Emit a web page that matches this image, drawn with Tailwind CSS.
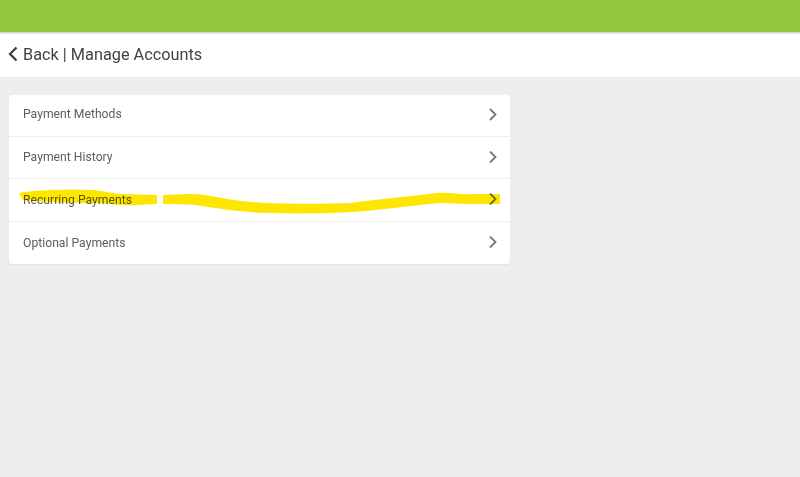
<!DOCTYPE html>
<html lang="en">
<head>
    <meta charset="UTF-8">
    <meta name="viewport" content="width=device-width, initial-scale=1.0">
    <title>Manage Accounts</title>
    <script src="https://cdn.jsdelivr.net/npm/@tailwindcss/browser@4"></script>
</head>
<body class="h-[477px] bg-[#eeeeee] font-['Roboto',sans-serif] overflow-hidden">
    <div class="relative h-[490px] w-[810px] bg-[#eeeeee] flex flex-col blur-[0.7px]">
        <div class="h-[32px] bg-[#92c83e] shadow-[0_1px_2px_rgba(0,0,0,0.25)] z-10"></div>
        <div class="h-[46px] bg-white flex items-center pl-[7px] pt-[2px] text-[16.3px] text-[#3f4346] border-b border-[#e8e8e8]">
            <svg class="w-[12px] h-[18px] mr-[4px] -mt-[3px]" viewBox="0 0 12 18" fill="none" stroke="#3a3f44" stroke-width="2.2">
                <path d="M9.5 2.5 L3 9 L9.5 15.5"/>
            </svg>
            <span>Back | Manage Accounts</span>
        </div>

        <div class="pt-[17px] pl-[9px]">
            <div class="w-[501px] bg-white rounded-[3px] shadow-[0_1px_2px_rgba(0,0,0,0.06)] text-[12.2px] text-[#5a5e62]">
                <div class="h-[42px] flex items-center justify-between pl-[14px] pr-[12px] pb-[2px] border-b border-[#ededed]">
                    <span>Payment Methods</span>
                    <svg class="w-[10px] h-[14px]" viewBox="0 0 10 14" fill="none" stroke="#74787c" stroke-width="1.8"><path d="M2 1 L7.5 6.5 L2 12"/></svg>
                </div>
                <div class="h-[42px] flex items-center justify-between pl-[14px] pr-[12px] border-b border-[#ededed]">
                    <span>Payment History</span>
                    <svg class="w-[10px] h-[14px]" viewBox="0 0 10 14" fill="none" stroke="#74787c" stroke-width="1.8"><path d="M2 .5 L7.5 6 L2 11.5"/></svg>
                </div>
                <div class="h-[43px] flex items-center justify-between pl-[14px] pr-[12px] border-b border-[#ededed]">
                    <span>Recurring Payments</span>
                    <svg class="w-[10px] h-[14px]" viewBox="0 0 10 14" fill="none" stroke="#74787c" stroke-width="1.8"><path d="M2 .5 L7.5 6 L2 11.5"/></svg>
                </div>
                <div class="h-[42px] flex items-center justify-between pl-[14px] pr-[12px]">
                    <span>Optional Payments</span>
                    <svg class="w-[10px] h-[14px]" viewBox="0 0 10 14" fill="none" stroke="#74787c" stroke-width="1.8"><path d="M2 .5 L7.5 6 L2 11.5"/></svg>
                </div>
            </div>
        </div>

        <!-- marker scribble over the recurring payments row -->
        <svg class="absolute left-0 top-0 mix-blend-multiply pointer-events-none" width="800" height="477" viewBox="0 0 800 477" fill="#ffe600">
            <path d="M19 193 C30 190 70 189 93 190 C105 191 110 193 120 194 L157 195 L157 204 L135 205 C115 206 110 203 95 203 C70 203 40 202 23 200 Z"/>
            <path d="M163 195 C175 195 190 193 205 195 C225 199 245 202 265 203 C290 204 325 204 350 203 C375 200 410 196 437 193 C450 192 460 195 475 194 L500 194 L500 204 L470 204 C455 204 445 202 430 204 C410 206 385 209 365 211 C345 213 300 214 265 213 C240 212 215 208 195 205 C185 204 175 204 163 204 Z"/>
        </svg>
    </div>
</body>
</html>
